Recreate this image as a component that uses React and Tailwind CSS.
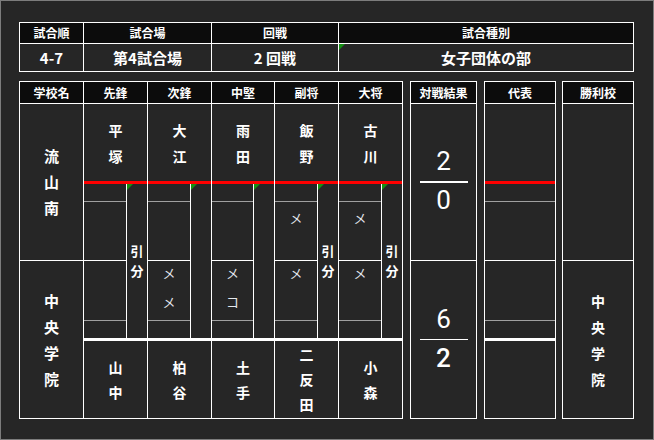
import React from "react";

const GreenMark = () => (
  <svg className="absolute top-0 left-0" width="6" height="6" viewBox="0 0 6 6">
    <polygon points="0,0 6,0 0,6" fill="#139013" />
  </svg>
);

const Stack = ({ text, className }) => (
  <div className={"flex flex-col items-center " + className}>
    {Array.from(text).map((c, i) => (
      <span key={i}>{c}</span>
    ))}
  </div>
);

const players = [
  { head: "先鋒", top: "平塚", bottom: "山中", topMarks: [], botMarks: [], draw: true, w: 64, lw: 43 },
  { head: "次鋒", top: "大江", bottom: "柏谷", topMarks: [], botMarks: ["メ", "メ"], draw: false, w: 64, lw: 43 },
  { head: "中堅", top: "雨田", bottom: "土手", topMarks: [], botMarks: ["メ", "コ"], draw: false, w: 63, lw: 42 },
  { head: "副将", top: "飯野", bottom: "二反田", topMarks: ["メ"], botMarks: ["メ"], draw: true, w: 64, lw: 43 },
  { head: "大将", top: "古川", bottom: "小森", topMarks: ["メ"], botMarks: ["メ"], draw: true, w: 64, lw: 43 },
];

const Head = ({ children }) => (
  <div className="h-[22px] border-b border-white bg-[#0c0c0c] flex items-center justify-center text-[12px] font-bold leading-none">
    {children}
  </div>
);

const Marks = ({ marks, className }) => (
  <div className={"flex flex-col items-center gap-[5px] text-[13px] leading-[24px] text-[#e4e8ee] font-normal " + className}>
    {marks.map((m, i) => (
      <span key={i}>{m}</span>
    ))}
  </div>
);

const PlayerCol = ({ p }) => (
  <div className={"flex flex-col border-r border-white " + (p.w === 63 ? "w-[63px]" : "w-[64px]")}>
    <Head>{p.head}</Head>
    <div className="h-[80px] border-b-[3px] border-b-[#ff0000] flex items-center justify-center">
      <Stack text={p.top} className="text-[14px] font-bold leading-[26px]" />
    </div>
    <div className="h-[157px] border-b-[3px] border-b-white flex">
      <div className={"flex flex-col border-r border-white " + (p.lw === 42 ? "w-[42px]" : "w-[43px]")}>
        <div className="h-[18px] border-b border-b-[#a0a0a0]"></div>
        <div className="h-[59px] border-b border-b-white">
          <Marks marks={p.topMarks} className="pt-[4px]" />
        </div>
        <div className="h-[60px] border-b border-b-[#a0a0a0]">
          <Marks marks={p.botMarks} className="pt-0" />
        </div>
        <div className="flex-1"></div>
      </div>
      <div className="relative flex-1 flex items-center justify-center">
        <GreenMark />
        {p.draw && <Stack text="引分" className="text-[13px] font-bold leading-[20px]" />}
      </div>
    </div>
    <div className="h-[78px] border-b border-white flex items-center justify-center">
      <Stack text={p.bottom} className="text-[14px] font-bold leading-[25px]" />
    </div>
  </div>
);

export default function App() {
  return (
    <div className="w-[654px] h-[440px] bg-[#262626] border border-[#7c7c7c] pt-[21px] pl-[18px] text-white font-['Noto_Sans_CJK_JP','Noto_Sans',sans-serif]">
      {/* top info table */}
      <div className="flex w-[615px] border-t border-l border-white">
        {[
          { h: "試合順", v: "4-7", w: "w-[64px]" },
          { h: "試合場", v: "第4試合場", w: "w-[128px]" },
          { h: "回戦", v: "2 回戦", w: "w-[127px]" },
          { h: "試合種別", v: "女子団体の部", w: "w-[295px]", mark: true },
        ].map((c, i) => (
          <div key={i} className={"flex flex-col border-r border-white " + c.w}>
            <div className="h-[21px] border-b border-white bg-[#0c0c0c] flex items-center justify-center text-[12px] font-bold leading-none">
              {c.h}
            </div>
            <div className="relative h-[28px] border-b border-white flex items-center justify-center text-[15px] font-bold leading-none">
              {c.mark && <GreenMark />}
              {c.v}
            </div>
          </div>
        ))}
      </div>

      {/* main table */}
      <div className="mt-[9px] flex items-start">
        <div className="flex border-t border-l border-white">
          <div className="w-[64px] flex flex-col border-r border-white">
            <Head>学校名</Head>
            <div className="h-[157px] border-b border-white flex items-center justify-center">
              <Stack text="流山南" className="text-[15px] font-bold leading-[26px]" />
            </div>
            <div className="h-[158px] border-b border-white flex items-center justify-center">
              <Stack text="中央学院" className="text-[15px] font-bold leading-[26px]" />
            </div>
          </div>
          {players.map((p, i) => (
            <PlayerCol key={i} p={p} />
          ))}
        </div>

        {/* result */}
        <div className="ml-[7px] w-[67px] flex flex-col border-t border-l border-r border-white">
          <Head>対戦結果</Head>
          <div className="h-[157px] border-b border-white flex flex-col items-center font-['Roboto',sans-serif]">
            <div className="mt-[42px] h-[30px] text-[26px] leading-[30px]">2</div>
            <div className="mt-[5px] h-[2px] w-[48px] bg-white"></div>
            <div className="mt-[2px] h-[30px] text-[26px] leading-[30px]">0</div>
          </div>
          <div className="h-[158px] border-b border-white flex flex-col items-center font-['Roboto',sans-serif]">
            <div className="mt-[43px] h-[30px] text-[26px] leading-[30px]">6</div>
            <div className="mt-[5px] h-px w-[48px] bg-white"></div>
            <div className="mt-[3px] h-[30px] text-[26px] leading-[30px] font-medium">2</div>
          </div>
        </div>

        {/* representative */}
        <div className="ml-[7px] w-[72px] flex flex-col border-t border-l border-r border-white">
          <Head>代表</Head>
          <div className="h-[80px] border-b-[3px] border-b-[#ff0000]"></div>
          <div className="h-[18px] border-b border-b-[#a0a0a0]"></div>
          <div className="h-[59px] border-b border-b-white"></div>
          <div className="h-[60px] border-b border-b-[#a0a0a0]"></div>
          <div className="h-[20px] border-b-[3px] border-b-white"></div>
          <div className="h-[78px] border-b border-white"></div>
        </div>

        {/* winner */}
        <div className="ml-[6px] w-[72px] flex flex-col border-t border-l border-r border-white">
          <Head>勝利校</Head>
          <div className="h-[157px] border-b border-white"></div>
          <div className="h-[158px] border-b border-white flex items-center justify-center">
            <Stack text="中央学院" className="text-[14px] font-bold leading-[26px]" />
          </div>
        </div>
      </div>
    </div>
  );
}
